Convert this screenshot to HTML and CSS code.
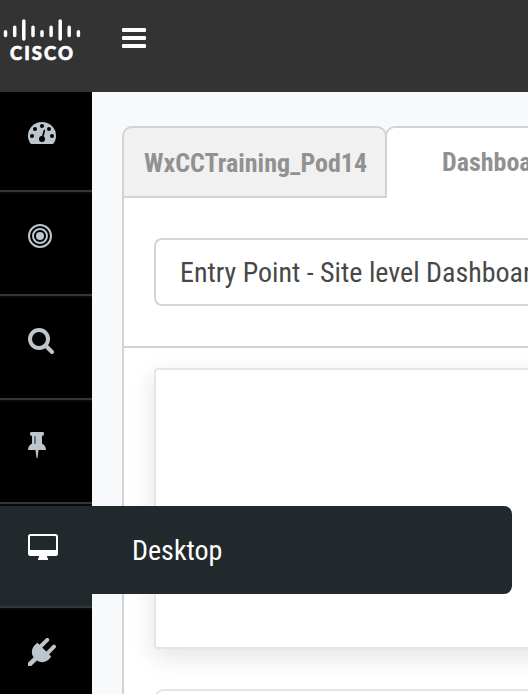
FILE: index.html
```html
<!DOCTYPE html>
<html lang="en">
<head>
<meta charset="utf-8">
<title>Dashboard</title>
<link rel="stylesheet" href="styles.css">
</head>
<body>
<header class="topbar">
  <div class="brand">
    <svg class="brand-bars" width="84" height="42" viewBox="0 0 84 42" stroke="#fff" stroke-width="3.5" stroke-linecap="round"><path d="M5.500 31.700v3.700M14.700 27.300v8.100M23.800 21v18M33 27.300v8.100M42 31.700v3.700M51.100 27.300v8.100M60.200 21v18M69.200 27.300v8.100M78.400 31.700v3.700"/></svg>
    <span class="brand-name">CISCO</span>
  </div>
  <div class="menu"><i></i><i></i><i></i></div>
</header>
<div class="body">
  <nav class="sidebar">
    <a class="item first"><svg width="28" height="22" viewBox="0 0 28 22"><path fill="#bcc6cc" d="M3 22C1 19.700 0 17 0 14a14 14 0 0 1 28 0c0 3-1 5.700-3 8z"/><g fill="#000"><circle cx="4" cy="14" r="2"/><circle cx="7" cy="7" r="2"/><circle cx="14" cy="4" r="2"/><circle cx="21" cy="7" r="2"/><circle cx="24" cy="14" r="2"/><circle cx="14" cy="17" r="3"/></g><path d="M14.200 16.500L16.400 8.500" stroke="#000" stroke-width="1.600" stroke-linecap="round"/></svg></a>
    <a class="item"><svg width="24" height="24" viewBox="0 0 24 24" fill="none" stroke="#bcc6cc" stroke-width="2"><circle cx="12" cy="12" r="11"/><circle cx="12" cy="12" r="7"/><circle cx="12" cy="12" r="4" fill="#bcc6cc" stroke="none"/></svg></a>
    <a class="item"><svg width="26" height="26" viewBox="0 0 26 26" fill="none" stroke="#bcc6cc" stroke-width="4"><circle cx="11" cy="11" r="9"/><path d="M17.500 17.500L24 24" stroke-linecap="round"/></svg></a>
    <a class="item"><svg width="18" height="26" viewBox="0 0 18 26"><path fill="#bcc6cc" d="M3.500 0h11a1.500 1.500 0 0 1 1.500 2 2 2 0 0 1-2 2v7.500c2.500 1.300 4 3.500 4 6.500h-7.500L9.500 26h-1L7.500 18H0c0-3 1.500-5.200 4-6.500V4a2 2 0 0 1-2-2 1.500 1.500 0 0 1 1.500-2z"/><path fill="#6a7378" d="M6 4.200h2v7.600H6z"/></svg></a>
    <a class="item active"><svg width="30" height="26" viewBox="0 0 30 26"><path fill="#fff" fill-rule="evenodd" d="M2.500 0h25A2.500 2.500 0 0 1 30 2.500v17a2.500 2.500 0 0 1-2.500 2.500h-8.500c0 1.300.3 2 1 2.500V26H10v-1.500c.7-.5 1-1.200 1-2.500H2.500A2.500 2.500 0 0 1 0 19.500v-17A2.500 2.500 0 0 1 2.500 0zM2 2.800v13.200h26V2.800a.8.8 0 0 0-.8-.8H2.800a.8.8 0 0 0-.8.800z"/></svg><span class="flyout">Desktop</span></a>
    <a class="item plug"><svg width="28" height="28" viewBox="0 0 28 28"><path fill="#bcc6cc" d="M9.500 4.800L23.200 18.500c-3.500 5.700-9.500 7.200-14.200 3.900L3.200 28H0V24.800l5.600-5.600C2.300 14.800 3.800 8.600 9.500 4.800z"/><path d="M12.500 8.500L19.300 1.800M19.300 15.300L26 8.600" stroke="#bcc6cc" stroke-width="3.900" stroke-linecap="round"/></svg></a>
  </nav>
  <main class="content">
    <div class="tabs">
      <div class="tab tab-off">WxCCTraining_Pod14</div>
      <div class="tab tab-on">Dashboard</div>
    </div>
    <section class="panel">
      <div class="filter"><div class="select">Entry Point - Site level Dashboard</div></div>
      <div class="cards">
        <div class="card"></div>
        <div class="card next"></div>
      </div>
    </section>
  </main>
</div>
</body>
</html>
```
FILE: styles.css
```css
* { box-sizing: border-box; }
body {
  margin: 0;
  width: 528px;
  height: 694px;
  overflow: hidden;
  background: #f8f9fb;
  font-family: "Roboto Condensed", Roboto, sans-serif;
  font-stretch: 75%;
}
svg { display: block; }
.topbar { display: flex; height: 92px; background: #333; }
.brand { width: 122px; flex: none; }
.brand-name {
  display: block;
  margin: 1px 0 0 10px;
  font: 900 18.500px/20px Lato, sans-serif;
  letter-spacing: 2px;
  color: #fff;
  -webkit-text-stroke: 0.600px #fff;
}
.menu { display: flex; flex-direction: column; gap: 4px; padding-top: 28px; }
.menu i { width: 24px; height: 4px; border-radius: 1px; background: #fff; }
.body { display: flex; height: 602px; }
.sidebar { width: 92px; flex: none; background: #000; }
.item {
  position: relative;
  display: block;
  height: 104px;
  padding: 30px 0 0 28px;
  border-top: 2px solid #08080b;
  border-bottom: 2px solid #33363f;
}
.item.first { height: 100px; padding-top: 28px; border-top-color: #000; }
.item.active { padding-top: 28px; background: #22292c; }
.item.plug { height: 86px; padding-top: 28px; border-bottom: 0; }
.flyout {
  position: absolute;
  z-index: 2;
  left: 92px;
  top: 0;
  width: 420px;
  height: 88px;
  padding-left: 40px;
  border-radius: 0 8px 8px 0;
  background: #22292c;
  color: #fff;
  font-size: 28px;
  line-height: 89px;
}
.content { flex: 1; min-width: 0; overflow: hidden; padding: 34px 0 0 30px; }
.tabs { display: flex; height: 72px; }
.tab {
  flex: none;
  height: 72px;
  border: 2px solid #d2d3d5;
  border-radius: 10px 10px 0 0;
  color: #919191;
  font-size: 26px;
  font-weight: 700;
  line-height: 71px;
  white-space: nowrap;
}
.tab-off { width: 265px; padding-left: 20px; background: #f1f1f1; }
.tab-on {
  flex: 1;
  min-width: 0;
  margin-left: -2px;
  padding-left: 55px;
  overflow: hidden;
  border-right: 0;
  border-bottom: 0;
  border-top-right-radius: 0;
  background: #fff;
  line-height: 69px;
}
.panel { height: 496px; overflow: hidden; border-left: 2px solid #d2d3d5; background: #fff; }
.filter { height: 150px; padding: 40px 0 0 30px; border-bottom: 2px solid #d2d3d5; }
.select {
  height: 68px;
  padding-left: 24px;
  overflow: hidden;
  border: 2px solid #d4d5db;
  border-right: 0;
  border-radius: 8px 0 0 8px;
  color: #484848;
  font-size: 28px;
  line-height: 65px;
  white-space: nowrap;
}
.cards {
  display: flex;
  flex-direction: column;
  gap: 40px;
  margin-right: -40px;
  padding: 20px 0 0 30px;
}
.card {
  height: 281px;
  border: 2px solid #e6e5e6;
  border-radius: 4px;
  background: #fff;
  box-shadow: 0 8px 24px rgba(50, 35, 40, 0.130);
}
.card.next { height: 60px; border-radius: 10px; box-shadow: none; }
```
